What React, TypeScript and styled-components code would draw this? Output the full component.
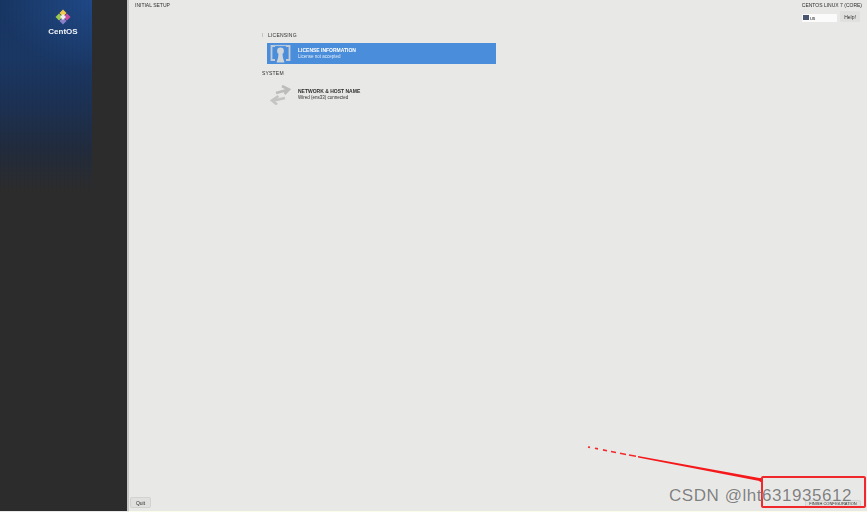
import styled, { createGlobalStyle } from "styled-components";
import { FC } from "react";

const GlobalStyle = createGlobalStyle`
  html, body {
    margin: 0;
    padding: 0;
    width: 100%;
    height: 100%;
    overflow: hidden;
    background: #e8e8e6;
    font-family: "Liberation Sans", Arial, sans-serif;
  }
`;

const Page = styled.div`
  position: relative;
  width: 867px;
  height: 512px;
  display: flex;
  overflow: hidden;
  background: #e8e8e6;
`;

const Sidebar = styled.aside`
  width: 127px;
  height: 511px;
  flex-shrink: 0;
  background: #2c2c2c;
  border-right: 2px solid #c6c6c4;
  box-sizing: content-box;
`;

const BluePanel = styled.div`
  width: 92px;
  height: 190px;
  display: flex;
  flex-direction: column;
  align-items: flex-end;
  padding: 9px 13px 0 0;
  box-sizing: border-box;
  background:
    repeating-linear-gradient(90deg, rgba(0, 0, 0, 0.025) 0 1px, transparent 1px 4px),
    radial-gradient(ellipse 90px 70px at 100% 0%, rgba(34, 78, 146, 0.75), transparent),
    linear-gradient(180deg, #183663 0%, #1a3764 30%, #1c3153 55%, #212b3d 78%, #2c2c2c 100%);
`;

const Logo = styled.div`
  width: 32px;
  display: flex;
  flex-direction: column;
  align-items: center;
  gap: 2px;
`;

const LogoName = styled.span`
  color: #f2f4f8;
  font-size: 8px;
  font-weight: 700;
  line-height: 10px;
  filter: blur(0.5px);
`;

const Main = styled.main`
  flex: 1;
  height: 511px;
  display: flex;
  flex-direction: column;
  background: #e8e8e6;
`;

const TopBar = styled.header`
  height: 32px;
  display: flex;
  justify-content: space-between;
  padding: 2px 5px 0 6px;
  box-sizing: border-box;
`;

const Blurry = styled.span<{ $size?: number; $color?: string; $weight?: number }>`
  font-size: ${(p) => p.$size ?? 5}px;
  font-weight: ${(p) => p.$weight ?? 400};
  line-height: 6px;
  color: ${(p) => p.$color ?? "#2e2e2e"};
  white-space: nowrap;
  filter: blur(0.7px);
`;

const TopRight = styled.div`
  display: flex;
  flex-direction: column;
  align-items: flex-end;
  gap: 3px;
`;

const KeyboardRow = styled.div`
  display: flex;
  align-items: center;
  gap: 3px;
  margin-right: 2px;
`;

const KeyboardField = styled.div`
  width: 35px;
  height: 8px;
  margin-top: 2px;
  background: #fbfbfb;
  border-radius: 1px;
  display: flex;
  align-items: center;
  gap: 1px;
  padding-left: 1px;
  box-sizing: border-box;
`;

const Flag = styled.span`
  width: 6px;
  height: 5px;
  background: #4a5570;
  filter: blur(0.5px);
`;

const HelpButton = styled.div`
  width: 20px;
  height: 11px;
  display: flex;
  align-items: center;
  justify-content: center;
  background: #e0e0de;
  border-radius: 1px;
`;

const Hub = styled.section`
  width: 370px;
  margin-left: 133px;
  display: flex;
  flex-direction: column;
`;

const SectionLabel = styled.div<{ $gap?: number }>`
  height: 6px;
  display: flex;
  align-items: center;
  gap: ${(p) => p.$gap ?? 0}px;
  letter-spacing: 0.2px;
`;

const Tick = styled.span`
  width: 1px;
  height: 4px;
  background: #c4c4c2;
`;

const Spoke = styled.div<{ $active?: boolean; $top: number }>`
  width: 229px;
  height: 21px;
  margin: ${(p) => p.$top}px 0 0 5px;
  display: flex;
  align-items: center;
  gap: 7px;
  padding-left: 3px;
  box-sizing: border-box;
  background: ${(p) => (p.$active ? "#4a8ddb" : "transparent")};
`;

const SpokeText = styled.div`
  display: flex;
  flex-direction: column;
  gap: 1px;
`;

const Footer = styled.footer`
  margin-top: auto;
  height: 16px;
  display: flex;
  align-items: flex-start;
  justify-content: space-between;
  padding: 2px 6px 0 1px;
  box-sizing: border-box;
`;

const FooterButton = styled.div<{ $width: number; $top?: number }>`
  width: ${(p) => p.$width}px;
  height: ${(p) => 11 - (p.$top ?? 0)}px;
  margin-top: ${(p) => p.$top ?? 0}px;
  display: flex;
  align-items: center;
  justify-content: center;
  background: #e0e0de;
  border: 1px solid #d2d2d0;
  border-radius: 2px;
  box-sizing: border-box;
`;

const BottomEdge = styled.div`
  position: absolute;
  left: 129px;
  right: 0;
  bottom: 0;
  height: 1px;
  background: #fbfbe9;
`;

const Callout = styled.div`
  position: absolute;
  left: 761px;
  top: 476px;
  width: 101px;
  height: 28px;
  border: 2px solid #f0282c;
  border-radius: 2px;
  box-sizing: content-box;
`;

const ArrowLine = styled.svg`
  position: absolute;
  left: 580px;
  top: 440px;
`;

const Watermark = styled.span`
  position: absolute;
  left: 669px;
  top: 486px;
  font-size: 17px;
  line-height: 20px;
  letter-spacing: 0.55px;
  color: rgba(105, 105, 105, 0.85);
  text-shadow: 0 0 1px rgba(255, 255, 255, 0.7);
  white-space: nowrap;
`;

const CentosMark: FC = () => (
  <svg width="16" height="16" viewBox="0 0 16 16" style={{ filter: "blur(0.5px)" }}>
    <path d="M8 0.5 11.5 4 8 8 4.5 4Z" fill="#f2c94c" />
    <path d="M15.5 8 12 11.5 8 8 12 4.5Z" fill="#c84fa0" />
    <path d="M8 15.5 4.5 12 8 8 11.5 12Z" fill="#8a7fc8" />
    <path d="M0.5 8 4 4.5 8 8 4 11.5Z" fill="#9cc850" />
    <path d="M8 5 11 8 8 11 5 8Z" fill="#eeeeee" />
  </svg>
);

const UserFrameIcon: FC = () => (
  <svg width="21" height="19" viewBox="0 0 21 19" style={{ filter: "blur(0.5px)" }}>
    <path d="M5 2H1.5V16H5M16 2H19.5V16H16" fill="none" stroke="#c3ccd6" strokeWidth="1.8" />
    <path d="M3.5 1.5H17.5" stroke="#b3c6dc" strokeWidth="1.2" />
    <circle cx="10.5" cy="7" r="3.4" fill="#d0d5da" />
    <path d="M8.5 10H12.5L13 14 14.5 18.5H6.5L8 14Z" fill="#d0d5da" />
  </svg>
);

const ArrowsIcon: FC = () => (
  <svg width="21" height="20" viewBox="0 0 21 20" style={{ filter: "blur(0.5px)" }}>
    <path d="M6 8 17 5M12 1 19 4.5 14.5 9" fill="none" stroke="#bcbcba" strokeWidth="2.6" />
    <path d="M15 13 4 15.5M8.5 11 2 15.5 7 19.5" fill="none" stroke="#c4c4c2" strokeWidth="2.6" />
  </svg>
);

export default function App() {
  return (
    <Page>
      <GlobalStyle />
      <Sidebar>
        <BluePanel>
          <Logo>
            <CentosMark />
            <LogoName>CentOS</LogoName>
          </Logo>
        </BluePanel>
      </Sidebar>
      <Main>
        <TopBar>
          <Blurry>INITIAL SETUP</Blurry>
          <TopRight>
            <Blurry>CENTOS LINUX 7 (CORE)</Blurry>
            <KeyboardRow>
              <KeyboardField>
                <Flag />
                <Blurry>us</Blurry>
              </KeyboardField>
              <HelpButton>
                <Blurry>Help!</Blurry>
              </HelpButton>
            </KeyboardRow>
          </TopRight>
        </TopBar>
        <Hub>
          <SectionLabel $gap={5}>
            <Tick />
            <Blurry>LICENSING</Blurry>
          </SectionLabel>
          <Spoke $active $top={5}>
            <UserFrameIcon />
            <SpokeText>
              <Blurry $color="#ffffff" $weight={700}>LICENSE INFORMATION</Blurry>
              <Blurry $size={4.5} $color="#e2edf9">License not accepted</Blurry>
            </SpokeText>
          </Spoke>
          <SectionLabel style={{ marginTop: 6 }}>
            <Blurry>SYSTEM</Blurry>
          </SectionLabel>
          <Spoke $top={8}>
            <ArrowsIcon />
            <SpokeText>
              <Blurry $weight={700}>NETWORK & HOST NAME</Blurry>
              <Blurry $size={4.5}>Wired (ens33) connected</Blurry>
            </SpokeText>
          </Spoke>
        </Hub>
        <Footer>
          <FooterButton $width={21}>
            <Blurry>Quit</Blurry>
          </FooterButton>
          <FooterButton $width={56} $top={3}>
            <Blurry $size={4}>FINISH CONFIGURATION</Blurry>
          </FooterButton>
        </Footer>
      </Main>
      <BottomEdge />
      <ArrowLine width="190" height="50" viewBox="0 0 190 50">
        <path d="M8 7 L10 7.4 M15 8.3 L18 8.9 M23 9.9 L27 10.7 M31 11.5 L36 12.5 M40 13.3 L46 14.5 M49 15 L56 16.3" stroke="#f5292c" strokeWidth="1.6" fill="none" />
        <path d="M58 16 L182 38.6 L182 41.6 L58 17.6Z" fill="#f5191c" />
        <circle cx="181" cy="40" r="2" fill="#f5191c" />
      </ArrowLine>
      <Callout />
      <Watermark>CSDN @lht631935612</Watermark>
    </Page>
  );
}
